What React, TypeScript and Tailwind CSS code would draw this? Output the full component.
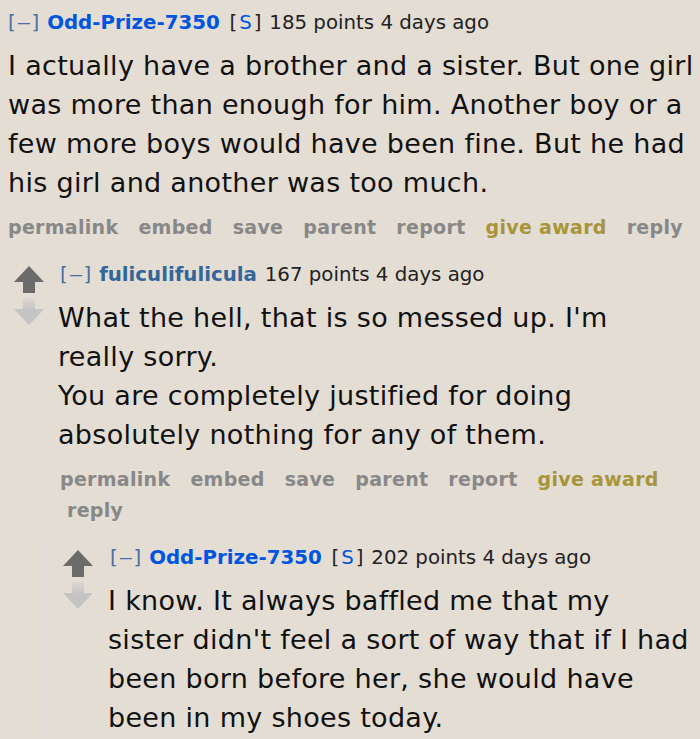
import React from "react";

const FONT = { fontFamily: '"DejaVu Sans", Verdana, sans-serif' };

function UpArrow() {
  return (
    <svg width="30" height="27" viewBox="0 0 30 27" className="block">
      <path d="M15 0 L30 16 L21 16 L21 27 L9 27 L9 16 L0 16 Z" fill="#6b6b6b" />
    </svg>
  );
}

function DownArrow() {
  return (
    <svg width="30" height="27" viewBox="0 0 30 27" className="block">
      <defs>
        <linearGradient id="dg" x1="0" y1="0" x2="0" y2="1">
          <stop offset="0" stopColor="#c4c4c4" stopOpacity="0.2" />
          <stop offset="0.45" stopColor="#c4c4c4" stopOpacity="1" />
          <stop offset="1" stopColor="#c4c4c4" stopOpacity="1" />
        </linearGradient>
      </defs>
      <path d="M9 0 L21 0 L21 11 L30 11 L15 27 L0 11 L9 11 Z" fill="url(#dg)" />
    </svg>
  );
}

function Tagline({
  name,
  submitter,
  points,
}: {
  name: string;
  submitter: boolean;
  points: string;
}) {
  return (
    <div className="text-[19.8px] leading-[28px] whitespace-nowrap text-[#222] [word-spacing:1.5px]">
      <span className="text-[#4a6fa5]">
        [<span className="inline-block scale-x-[1.5] mx-[3px]">–</span>]
      </span>{" "}
      <span
        className={
          submitter ? "font-bold text-[#0055df]" : "font-bold text-[#336699]"
        }
      >
        {name}
      </span>{" "}
      {submitter ? (
        <>
          <span className="text-[#222] ml-[2px]">
            [<span className="mx-[2px] text-[#0055df]">S</span>]
          </span>{" "}
        </>
      ) : (
        <span> </span>
      )}
      <span className="[word-spacing:0px]">{points} points 4 days ago</span>
    </div>
  );
}

function Body({ lines }: { lines: string[] }) {
  return (
    <div className="mt-[9px] text-[27px] leading-[39px] tracking-[0.3px] text-[#111]">
      {lines.map((l, i) => (
        <div key={i} className="whitespace-nowrap">
          {l}
        </div>
      ))}
    </div>
  );
}

function Buttons({ wrapReply }: { wrapReply?: boolean }) {
  const items = [
    "permalink",
    "embed",
    "save",
    "parent",
    "report",
    "give award",
    "reply",
  ];
  return (
    <div
      className={
        "mt-[10px] flex flex-wrap text-[19px] leading-[31px] tracking-[0.3px] font-bold text-[#888] " +
        (wrapReply ? "max-w-[620px]" : "")
      }
    >
      {items.map((t, i) => (
        <span
          key={t}
          className={
            (i === 0 ? "" : wrapReply && t === "reply" ? "pl-[7px] " : "pl-[20px] ") +
            (t === "give award" ? "text-[#a8953a]" : "")
          }
        >
          {t}
        </span>
      ))}
    </div>
  );
}

export default function App() {
  return (
    <div
      className="w-[700px] h-[739px] overflow-hidden bg-[#e3ddd4]"
      style={FONT}
    >
      {/* Comment 1 */}
      <div className="pl-[8px] pt-[9px]">
        <Tagline name="Odd-Prize-7350" submitter points="185" />
        <Body
          lines={[
            "I actually have a brother and a sister. But one girl",
            "was more than enough for him. Another boy or a",
            "few more boys would have been fine. But he had",
            "his girl and another was too much.",
          ]}
        />
        <Buttons />
      </div>

      {/* Comment 2 */}
      <div className="mt-[18px]">
        <div className="flex pl-[14px]">
          <div className="w-[44px] flex flex-col gap-[5px] pt-[5px]">
            <UpArrow />
            <DownArrow />
          </div>
          <div>
            <div className="pl-[2px]">
              <Tagline name="fuliculifulicula" submitter={false} points="167" />
            </div>
            <Body
              lines={[
                "What the hell, that is so messed up. I'm",
                "really sorry.",
                "You are completely justified for doing",
                "absolutely nothing for any of them.",
              ]}
            />
            <div className="pl-[2px]">
              <Buttons wrapReply />
            </div>
          </div>
        </div>

        {/* Child comment 3 */}
        <div className="ml-[44px] mt-[14px] border-l border-dotted border-[#dcdcf0] pt-[4px]">
          <div className="flex pl-[18px]">
            <div className="w-[45px] flex flex-col gap-[5px] pt-[6px]">
              <UpArrow />
              <DownArrow />
            </div>
            <div>
              <div className="pl-[2px]">
                <Tagline name="Odd-Prize-7350" submitter points="202" />
              </div>
              <Body
                lines={[
                  "I know. It always baffled me that my",
                  "sister didn't feel a sort of way that if I had",
                  "been born before her, she would have",
                  "been in my shoes today.",
                ]}
              />
            </div>
          </div>
        </div>
      </div>
    </div>
  );
}
